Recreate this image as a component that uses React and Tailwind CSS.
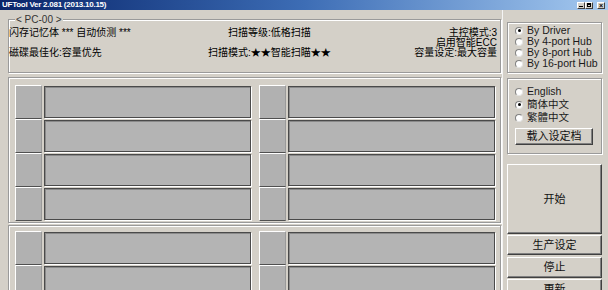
import React from 'react';

function TitleBar() {
  return (
    <div className="flex h-[10px] shrink-0 items-center justify-between bg-linear-to-r from-[#0a246a] via-[#3d6db5] to-[#a6caf0] pl-[2px] pr-[3px]">
      <span className="text-[8px] font-bold leading-[10px] tracking-[-0.25px] text-white">
        UFTool Ver 2.081 (2013.10.15)
      </span>
      <div className="flex items-center">
        <span className="flex h-[7px] w-[8px] items-end justify-center border border-t-white border-l-white border-r-[#404040] border-b-[#404040] bg-[#d4d0c8] pb-px">
          <span className="h-px w-[4px] bg-black" />
        </span>
        <span className="flex h-[7px] w-[8px] items-center justify-center border border-t-white border-l-white border-r-[#404040] border-b-[#404040] bg-[#d4d0c8]">
          <span className="h-[4px] w-[4px] border border-black border-t-2" />
        </span>
        <span className="ml-[4px] flex h-[7px] w-[8px] items-center justify-center border border-t-white border-l-white border-r-[#404040] border-b-[#404040] bg-[#d4d0c8] text-[7px] font-bold leading-none">
          ×
        </span>
      </div>
    </div>
  );
}

function SlotCell() {
  return (
    <div className="flex h-[34px]">
      <div className="h-full w-[27px] border border-t-white border-l-white border-r-[#9a9a9a] border-b-[#505050] bg-[#b1b1b1]" />
      <div className="ml-[2px] mt-px h-[32px] w-[207px] border border-[#4a4a4a] bg-[#b4b4b4] shadow-[1px_1px_0_#fff,inset_1px_1px_0_#8a8a8a]" />
    </div>
  );
}

function SlotGroup({ rows, className }) {
  return (
    <div className={`w-[493px] border border-[#9a9a9a] pl-[6px] shadow-[inset_1px_1px_0_#fff,1px_1px_0_#fff] ${className}`}>
      <div className="grid grid-cols-[236px_236px] gap-x-[8px]">
        {Array.from({ length: rows * 2 }).map((_, i) => (
          <SlotCell key={i} />
        ))}
      </div>
    </div>
  );
}

function Radio({ label, checked, h }) {
  return (
    <div className={`flex items-center ${h}`}>
      <span className="ml-[7px] flex h-[8px] w-[8px] shrink-0 items-center justify-center rounded-full border border-t-[#808080] border-l-[#808080] border-r-[#e4e4e4] border-b-[#e4e4e4] bg-white">
        {checked && <span className="h-[3px] w-[3px] rounded-full bg-black" />}
      </span>
      <span className="ml-[4px] whitespace-nowrap text-[10.5px] leading-none text-[#1a1a1a]">{label}</span>
    </div>
  );
}

function Btn({ children, className }) {
  return (
    <div
      className={`flex shrink-0 items-center justify-center border border-t-white border-l-white border-r-[#404040] border-b-[#404040] bg-[#d4d0c8] text-[11px] leading-none text-[#111] shadow-[inset_-1px_-1px_0_#808080] ${className}`}
    >
      {children}
    </div>
  );
}

export default function App() {
  return (
    <div className="flex h-[290px] w-[608px] flex-col overflow-hidden bg-[#d4d0c8] font-['Liberation_Sans','Noto_Sans_CJK_SC',sans-serif] text-black">
      <TitleBar />
      <div className="flex min-h-0 flex-1">
        {/* left side */}
        <div className="w-[502px] shrink-0 pl-[8px]">
          <div className="relative mt-[9px] h-[54px] w-[493px] border border-[#9a9a9a] pt-[8px] text-[10px] shadow-[inset_1px_1px_0_#fff,1px_1px_0_#fff]">
            <span className="absolute -top-[6px] left-[6px] bg-[#d4d0c8] px-px text-[10px] leading-[11px] text-[#333]">
              &lt; PC-00 &gt;
            </span>
            <div className="flex h-[10px] items-center leading-[10px]">
              <span className="w-[219px] shrink-0">闪存记忆体 *** 自动侦测 ***</span>
              <span>扫描等级:低格扫描</span>
              <span className="ml-auto pr-[3px]">主控模式:3</span>
            </div>
            <div className="flex h-[10px] items-center leading-[10px]">
              <span className="ml-auto pr-[3px]">启用智能ECC</span>
            </div>
            <div className="flex h-[10px] items-center leading-[10px]">
              <span className="w-[199px] shrink-0">磁碟最佳化:容量优先</span>
              <span>扫描模式:★★智能扫瞄★★</span>
              <span className="ml-auto pr-[3px]">容量设定:最大容量</span>
            </div>
          </div>
          <SlotGroup rows={4} className="mt-[4px] h-[146px] pt-[7px]" />
          <SlotGroup rows={2} className="mt-[2px] h-[80px] pt-[5px]" />
        </div>

        {/* right side */}
        <div className="flex flex-1 flex-col border-l border-l-[#f4f4f4] pl-[4px]">
          <div className="mt-[12px] h-[51px] w-[95px] shrink-0 border border-[#9a9a9a] pt-[2px] shadow-[inset_1px_1px_0_#fff,1px_1px_0_#fff]">
            <Radio h="h-[11px]" label="By Driver" checked />
            <Radio h="h-[11px]" label="By 4-port Hub" />
            <Radio h="h-[11px]" label="By 8-port Hub" />
            <Radio h="h-[11px]" label="By 16-port Hub" />
          </div>
          <div className="mt-[5px] h-[76px] w-[95px] shrink-0 border border-[#9a9a9a] pt-[6px] shadow-[inset_1px_1px_0_#fff,1px_1px_0_#fff]">
            <Radio h="h-[13px]" label="English" />
            <Radio h="h-[13px]" label="簡体中文" checked />
            <Radio h="h-[13px]" label="繁體中文" />
            <Btn className="ml-[7px] mt-[4px] h-[17px] w-[78px]">载入设定档</Btn>
          </div>
          <Btn className="mt-[10px] h-[70px] w-[95px]">开始</Btn>
          <Btn className="mt-px h-[20px] w-[95px]">生产设定</Btn>
          <Btn className="mt-[2px] h-[21px] w-[95px]">停止</Btn>
          <Btn className="mt-px h-[21px] w-[95px]">更新</Btn>
        </div>
      </div>
    </div>
  );
}
